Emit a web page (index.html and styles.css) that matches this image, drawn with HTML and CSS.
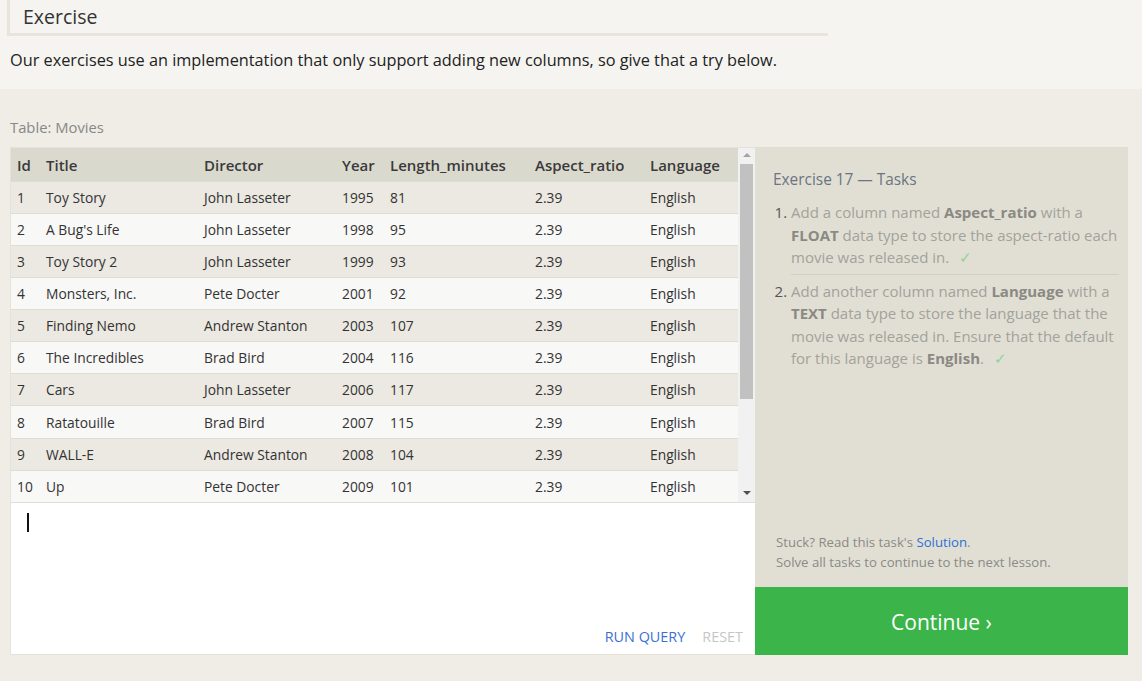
FILE: index.html
```html
<!DOCTYPE html>
<html>
<head>
<meta charset="utf-8">
<link rel="stylesheet" href="styles.css">
</head>
<body>
<div class="top">
  <div class="ex-head">Exercise</div>
  <p class="intro">Our exercises use an implementation that only support adding new columns, so give that a try below.</p>
</div>
<div class="lower">
  <div class="tlabel">Table: Movies</div>
  <div class="widget">
    <div class="left">
      <div class="tablewrap">
        <table class="data">
          <colgroup>
            <col class="c-id"><col class="c-title"><col class="c-dir"><col class="c-year"><col class="c-len"><col class="c-asp"><col class="c-lang">
          </colgroup>
          <thead>
            <tr><th>Id</th><th>Title</th><th>Director</th><th>Year</th><th>Length_minutes</th><th>Aspect_ratio</th><th>Language</th></tr>
          </thead>
          <tbody>
            <tr><td>1</td><td>Toy Story</td><td>John Lasseter</td><td>1995</td><td>81</td><td>2.39</td><td>English</td></tr>
            <tr><td>2</td><td>A Bug's Life</td><td>John Lasseter</td><td>1998</td><td>95</td><td>2.39</td><td>English</td></tr>
            <tr><td>3</td><td>Toy Story 2</td><td>John Lasseter</td><td>1999</td><td>93</td><td>2.39</td><td>English</td></tr>
            <tr><td>4</td><td>Monsters, Inc.</td><td>Pete Docter</td><td>2001</td><td>92</td><td>2.39</td><td>English</td></tr>
            <tr><td>5</td><td>Finding Nemo</td><td>Andrew Stanton</td><td>2003</td><td>107</td><td>2.39</td><td>English</td></tr>
            <tr><td>6</td><td>The Incredibles</td><td>Brad Bird</td><td>2004</td><td>116</td><td>2.39</td><td>English</td></tr>
            <tr><td>7</td><td>Cars</td><td>John Lasseter</td><td>2006</td><td>117</td><td>2.39</td><td>English</td></tr>
            <tr><td>8</td><td>Ratatouille</td><td>Brad Bird</td><td>2007</td><td>115</td><td>2.39</td><td>English</td></tr>
            <tr><td>9</td><td>WALL-E</td><td>Andrew Stanton</td><td>2008</td><td>104</td><td>2.39</td><td>English</td></tr>
            <tr><td>10</td><td>Up</td><td>Pete Docter</td><td>2009</td><td>101</td><td>2.39</td><td>English</td></tr>
          </tbody>
        </table>
        <div class="scrollbar">
          <div class="arrow up"></div>
          <div class="thumb"></div>
          <div class="arrow down"></div>
        </div>
      </div>
      <div class="editor">
        <div class="cursor"></div>
        <div class="actions">
          <span class="run">RUN QUERY</span>
          <span class="reset">RESET</span>
        </div>
      </div>
    </div>
    <div class="right">
      <div class="tasks">
        <h3 class="task-title">Exercise 17 — Tasks</h3>
        <ol class="task-list">
          <li>Add a column named <b>Aspect_ratio</b> with a <b>FLOAT</b> data type to store the aspect-ratio each movie was released in. <span class="check">✓</span></li>
          <li>Add another column named <b>Language</b> with a <b>TEXT</b> data type to store the language that the movie was released in. Ensure that the default for this language is <b>English</b>. <span class="check">✓</span></li>
        </ol>
        <div class="help">
          <div>Stuck? Read this task's <a class="sol">Solution</a>.</div>
          <div>Solve all tasks to continue to the next lesson.</div>
        </div>
      </div>
      <div class="continue">Continue ›</div>
    </div>
  </div>
</div>
</body>
</html>
```
FILE: styles.css
```css
html, body {
  margin: 0;
  padding: 0;
  background: #efede6;
  font-family: "Open Sans", "Noto Sans", sans-serif;
  color: #333;
}
.top {
  background: #f5f4f0;
  height: 89px;
  box-sizing: border-box;
}
.ex-head {
  margin-left: 7px;
  width: 805px;
  height: 33px;
  border-left: 3px solid #e6e4db;
  border-bottom: 3px solid #e6e4db;
  font-size: 19.5px;
  line-height: 33px;
  padding-left: 13px;
  color: #333;
}
.intro {
  margin: 0;
  padding: 13px 0 0 10px;
  font-size: 16.3px;
  line-height: 22px;
  color: #222;
}
.lower {
  padding: 27px 0 0 10px;
}
.tlabel {
  font-size: 14.8px;
  color: #888;
  line-height: 22px;
  margin-bottom: 9px;
}
.widget {
  display: flex;
  width: 1118px;
  height: 508px;
}
.left {
  width: 745px;
  display: flex;
  flex-direction: column;
  border: 1px solid #e4e2d9;
  border-right: none;
  box-sizing: border-box;
}
.tablewrap {
  display: flex;
  height: 354px;
  border-bottom: 1px solid #e0ded6;
}
.data {
  width: 727px;
  border-collapse: collapse;
  table-layout: fixed;
  font-size: 13.8px;
  color: #333;
}
.c-id { width: 29px; }
.c-title { width: 158px; }
.c-dir { width: 138px; }
.c-year { width: 48px; }
.c-len { width: 145px; }
.c-asp { width: 115px; }
.c-lang { width: 94px; }
.data thead tr {
  height: 33px;
}
.data th {
  background: #dad9ce;
  text-align: left;
  font-weight: 600;
  font-size: 15px;
  line-height: 20px;
  padding: 1px 0 0 6px;
  color: #3a3a3a;
  white-space: nowrap;
}
.data td {
  height: 31px;
  padding: 0 0 0 6px;
  border-top: 1px solid #dedcd4;
  white-space: nowrap;
}
.data tbody tr:nth-child(odd) td { background: #ebe9e2; }
.data tbody tr:nth-child(even) td { background: #f8f8f7; }
.scrollbar {
  width: 17px;
  background: #f1f1f1;
  display: flex;
  flex-direction: column;
  align-items: center;
}
.arrow {
  width: 0;
  height: 0;
  border-left: 4px solid transparent;
  border-right: 4px solid transparent;
}
.arrow.up {
  border-bottom: 4px solid #a3a3a3;
  margin-top: 5px;
}
.arrow.down {
  border-top: 4px solid #505050;
  margin-top: auto;
  margin-bottom: 7px;
}
.thumb {
  width: 13px;
  height: 235px;
  background: #c1c1c1;
  margin-top: 7px;
}
.editor {
  flex: 1;
  background: #fff;
  display: flex;
  flex-direction: column;
  padding: 10px 12px 7px 16px;
}
.cursor {
  width: 2px;
  height: 19px;
  background: #111;
}
.actions {
  margin-top: auto;
  display: flex;
  justify-content: flex-end;
  gap: 17px;
  font-size: 14.4px;
  line-height: 20px;
}
.run { color: #3b6fd6; }
.reset { color: #c6c6c6; }
.right {
  width: 373px;
  display: flex;
  flex-direction: column;
  background: #e1dfd4;
}
.tasks {
  flex: 1;
  padding: 22px 9px 0 18px;
  display: flex;
  flex-direction: column;
}
.task-title {
  margin: 0;
  font-weight: 400;
  font-size: 15.4px;
  line-height: 22px;
  color: #6b7482;
}
.task-list {
  margin: 10px 0 0 0;
  padding: 0 0 0 18px;
  font-size: 15px;
  line-height: 22.5px;
  color: #a3a29b;
}
.task-list li {
  padding-bottom: 5px;
  margin-bottom: 5px;
}
.task-list li:first-child {
  border-bottom: 1px solid #d2d0c6;
}
.task-list li::marker { color: #555; }
.task-list b { color: #8a8983; font-weight: 700; }
.check { color: #8bd39a; margin-left: 6px; }
.help {
  margin-top: auto;
  margin-bottom: 15px;
  margin-left: 3px;
  font-size: 13.2px;
  line-height: 20px;
  color: #8a8a86;
}
.sol { color: #2d6fd4; }
.continue {
  height: 68px;
  background: #3bb54a;
  color: #fff;
  font-size: 21px;
  display: flex;
  align-items: center;
  justify-content: center;
  padding-top: 1px;
  box-sizing: border-box;
}
```
